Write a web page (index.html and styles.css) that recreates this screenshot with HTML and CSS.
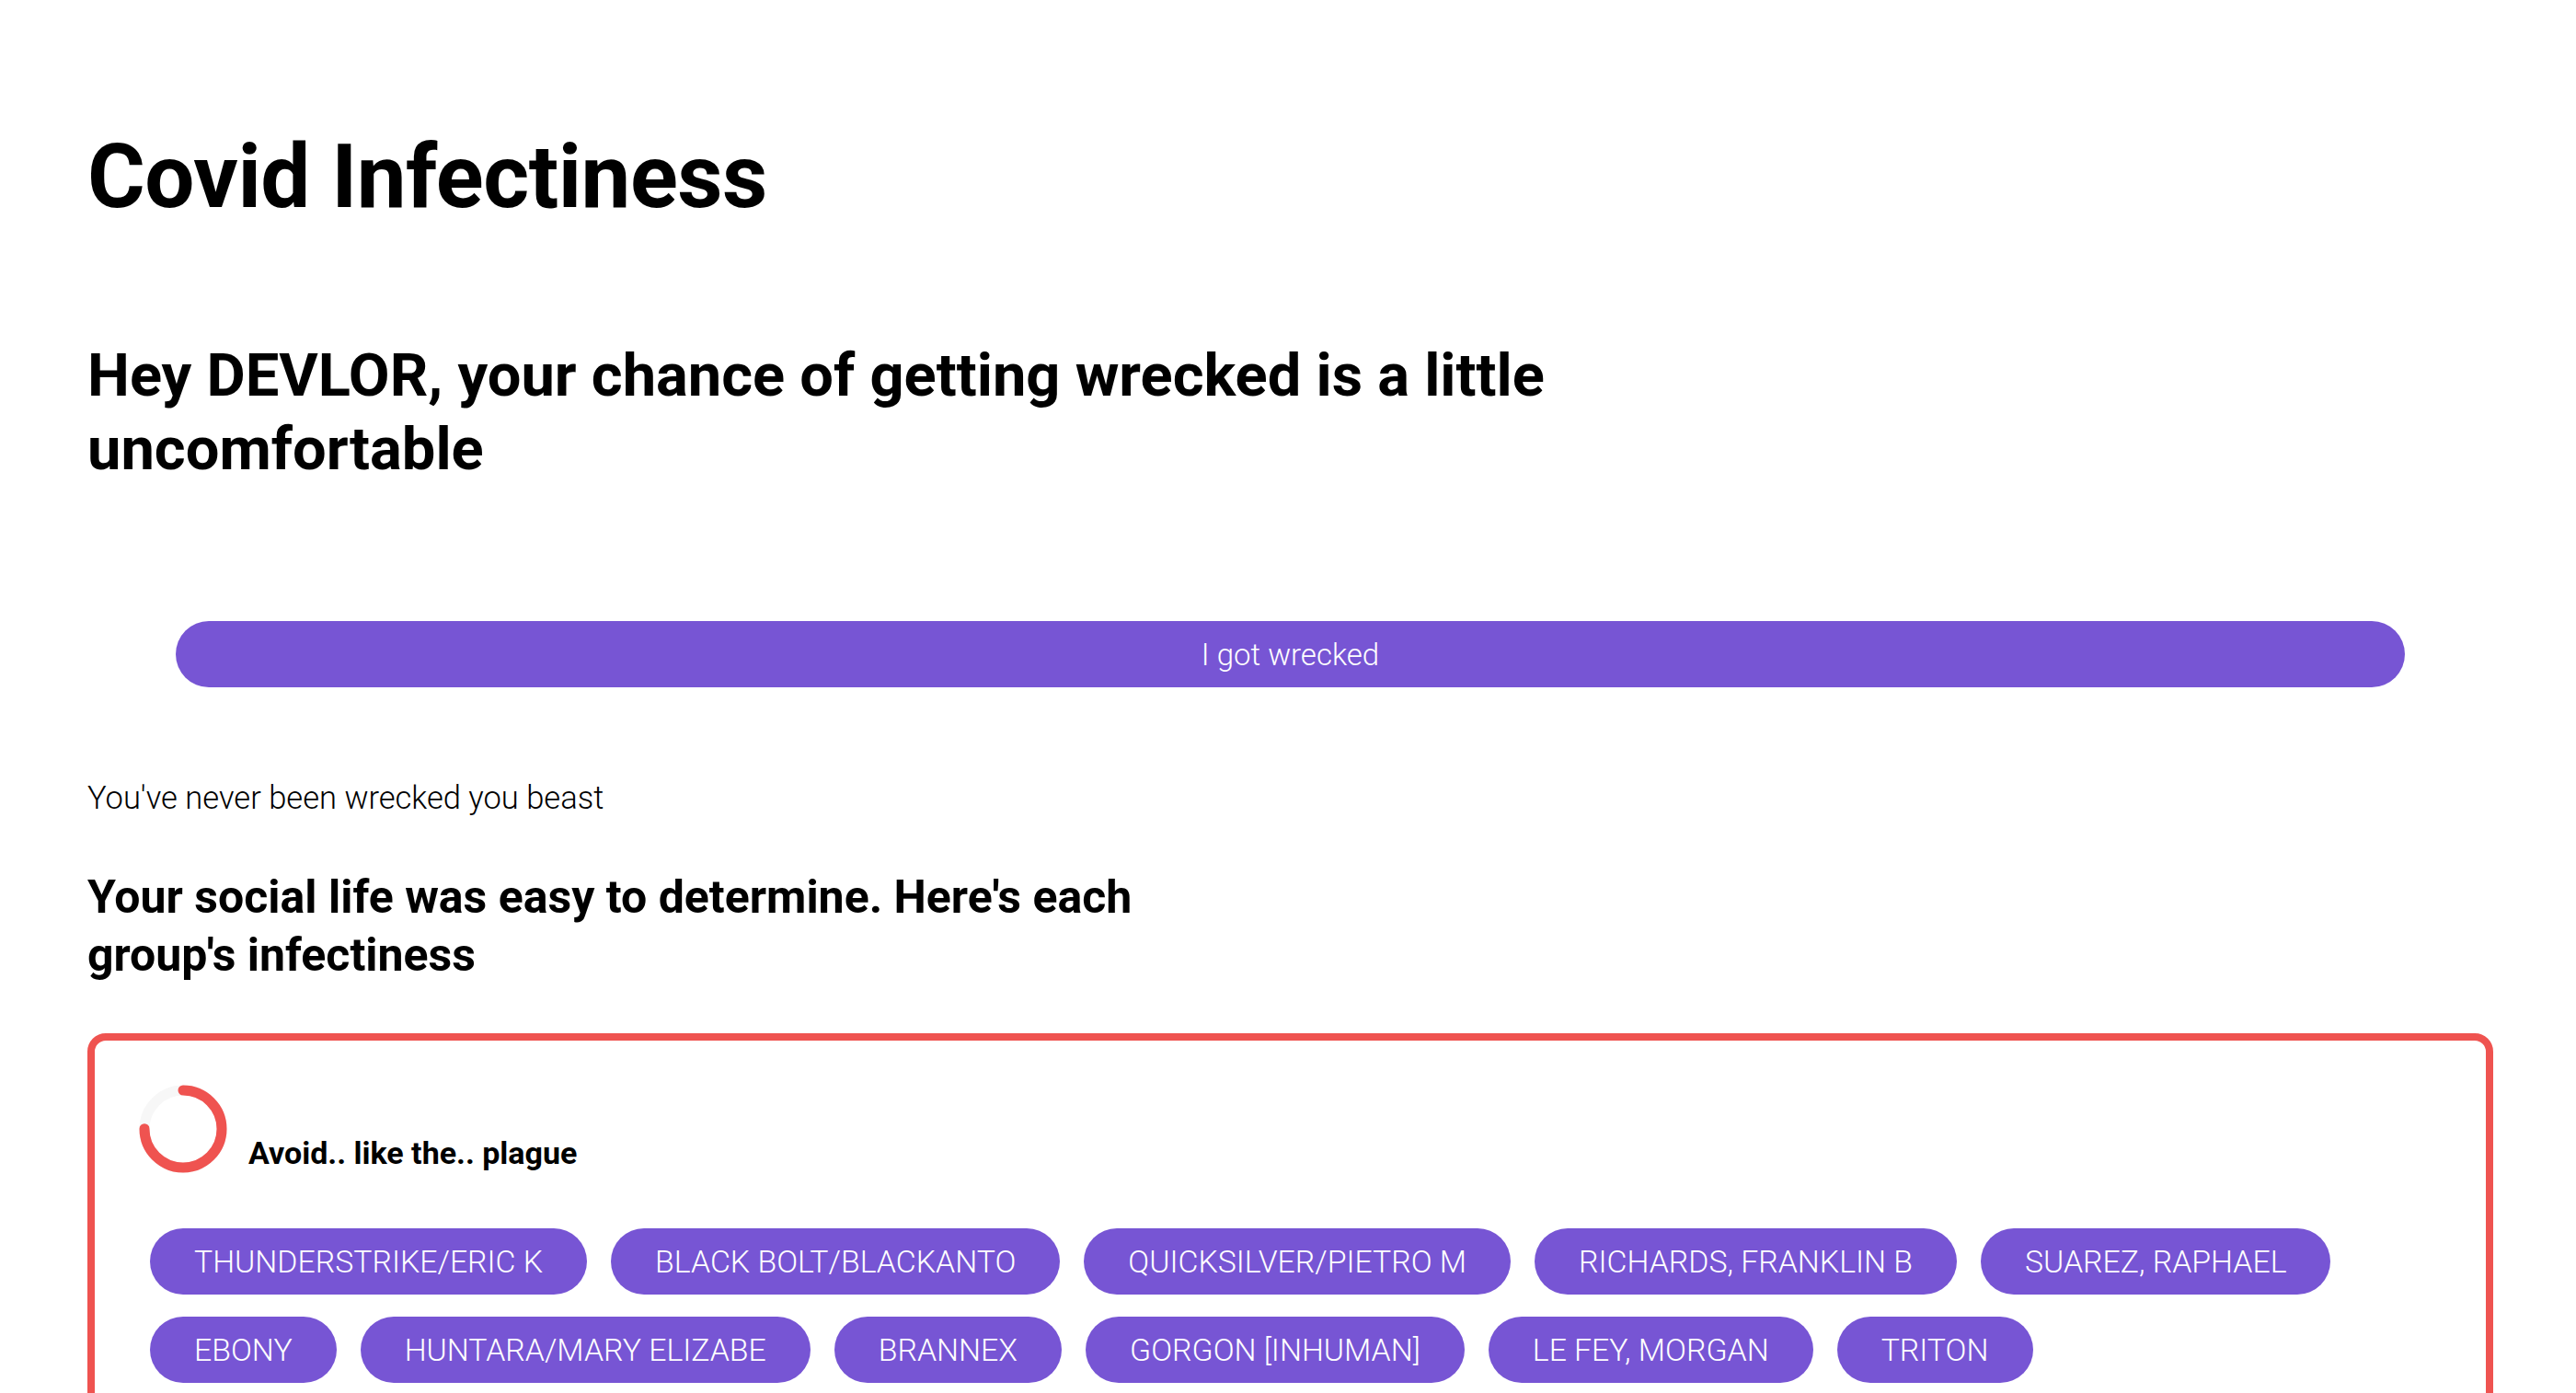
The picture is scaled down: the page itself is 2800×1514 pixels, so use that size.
FILE: index.html
```html
<!DOCTYPE html>
<html lang="en">
<head>
<meta charset="utf-8">
<title>Covid Infectiness</title>
<link rel="stylesheet" href="styles.css">
</head>
<body>
<main class="page">
  <h1 class="title">Covid Infectiness</h1>
  <h2 class="greeting">Hey DEVLOR, your chance of getting wrecked is a little uncomfortable</h2>
  <div class="action">
    <button class="wreck-btn" type="button">I got wrecked</button>
  </div>
  <p class="status">You've never been wrecked you beast</p>
  <h3 class="social">Your social life was easy to determine. Here's each group's infectiness</h3>

  <section class="group-card">
    <div class="group-head">
      <svg class="gauge" width="96" height="96" viewBox="0 0 96 96" aria-hidden="true">
        <circle cx="48" cy="48" r="42" fill="none" stroke="#f7f7f7" stroke-width="11"/>
        <circle cx="48" cy="48" r="42" fill="none" stroke="#ef5350" stroke-width="11" stroke-linecap="round"
          stroke-dasharray="197.9 263.9" transform="rotate(-90 48 48)"/>
      </svg>
      <span class="group-label">Avoid.. like the.. plague</span>
    </div>
    <div class="tags">
      <span class="tag">THUNDERSTRIKE/ERIC K</span>
      <span class="tag">BLACK BOLT/BLACKANTO</span>
      <span class="tag">QUICKSILVER/PIETRO M</span>
      <span class="tag">RICHARDS, FRANKLIN B</span>
      <span class="tag">SUAREZ, RAPHAEL</span>
      <span class="tag">EBONY</span>
      <span class="tag">HUNTARA/MARY ELIZABE</span>
      <span class="tag">BRANNEX</span>
      <span class="tag">GORGON [INHUMAN]</span>
      <span class="tag">LE FEY, MORGAN</span>
      <span class="tag">TRITON</span>
    </div>
  </section>
</main>
</body>
</html>
```

FILE: styles.css
```css
* { box-sizing: border-box; }

html, body {
  margin: 0;
  padding: 0;
  background: #ffffff;
}

body {
  font-family: Roboto, "Noto Sans", "Liberation Sans", sans-serif;
  color: #000000;
}

.page {
  padding: 139px 90px 80px 95px;
}

.title {
  margin: 0;
  font-size: 96px;
  line-height: 106px;
  font-weight: 700;
  letter-spacing: -0.5px;
}

.greeting {
  margin: 123px 0 0 0;
  max-width: 1743px;
  font-size: 65px;
  line-height: 80px;
  font-weight: 700;
}

.action {
  margin: 147px 96px 0 96px;
}

.wreck-btn {
  display: block;
  width: 100%;
  height: 72px;
  border: none;
  border-radius: 36px;
  background: #7755d4;
  color: #ffffff;
  font-family: inherit;
  font-size: 33px;
  font-weight: 300;
  padding: 0;
  cursor: pointer;
}

.status {
  margin: 97px 0 0 0;
  font-size: 34.5px;
  line-height: 46px;
  font-weight: 300;
}

.social {
  margin: 54px 0 0 0;
  max-width: 1250px;
  font-size: 50px;
  line-height: 63px;
  font-weight: 700;
}

.group-card {
  margin-top: 53px;
  border: 8px solid #ef5350;
  border-radius: 20px;
  padding: 48px;
  min-height: 600px;
}

.group-head {
  display: flex;
  align-items: flex-end;
  gap: 23px;
}

.gauge {
  display: block;
  flex: none;
}

.group-label {
  font-size: 34px;
  line-height: 36px;
  font-weight: 700;
  margin-bottom: 4px;
}

.tags {
  margin-top: 60px;
  padding-left: 12px;
  display: flex;
  flex-wrap: wrap;
  column-gap: 26px;
  row-gap: 24px;
}

.tag {
  display: inline-flex;
  align-items: center;
  height: 72px;
  padding: 0 48px;
  border-radius: 36px;
  background: #7755d4;
  color: #ffffff;
  font-size: 33.8px;
  font-weight: 300;
  white-space: nowrap;
}
```
